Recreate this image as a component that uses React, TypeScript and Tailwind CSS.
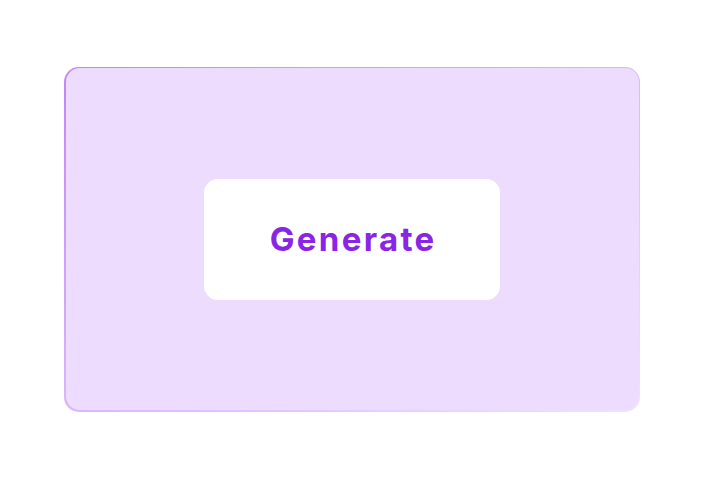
export default function App() {
  return (
    <div className="w-[704px] h-[480px] bg-white flex items-center justify-center pb-[2px]" style={{ fontFamily: 'Inter, "Noto Sans", sans-serif' }}>
      <div className="w-[576px] h-[345px] rounded-[15px] p-[1.5px] bg-gradient-to-br from-[#c084fc] via-[#d9b6fd] to-[#f0e2fe]">
        <div className="w-full h-full rounded-[14px] bg-[#eedcfe] flex items-center justify-center">
          <button className="w-[296px] h-[121px] rounded-[14px] bg-white flex items-center justify-center">
            <span className="text-[33px] font-bold tracking-[0.07em] text-[#8a24e6] leading-none pl-[0.07em]">Generate</span>
          </button>
        </div>
      </div>
    </div>
  );
}
